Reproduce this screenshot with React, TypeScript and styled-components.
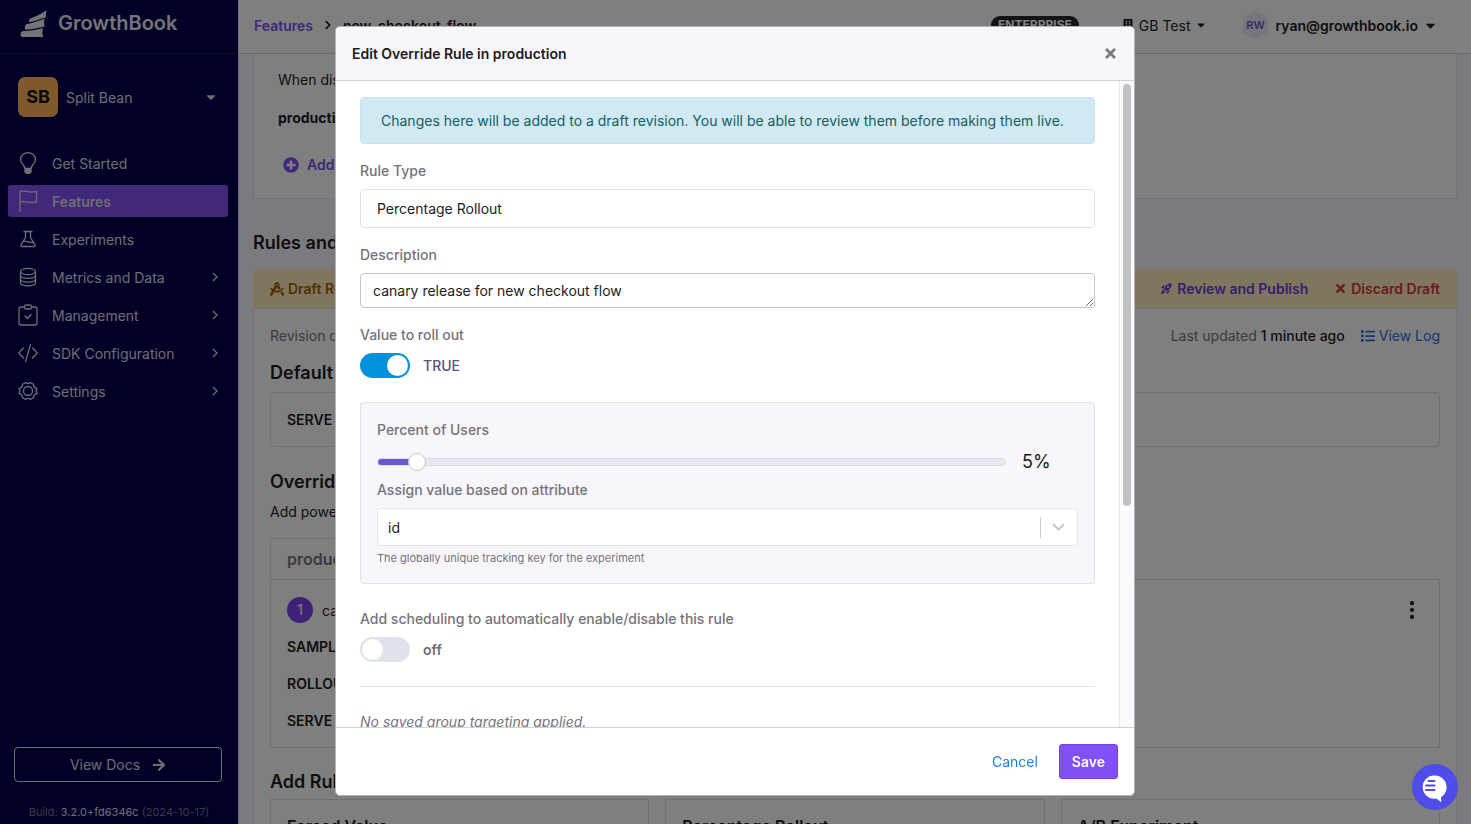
import React from "react";
import styled, { createGlobalStyle, css } from "styled-components";
import {
  FaArrowRight,
  FaBuilding,
  FaCaretDown,
  FaChevronRight,
  FaDraftingCompass,
  FaList,
  FaPlusCircle,
  FaTimes,
} from "react-icons/fa";
import { BsThreeDotsVertical } from "react-icons/bs";
import { MdRocketLaunch } from "react-icons/md";

const GlobalStyle = createGlobalStyle`
  *, *::before, *::after { box-sizing: border-box; }
  body {
    margin: 0;
    background: #f6f5fc;
    color: #1c1c22;
    font-family: Inter, "Liberation Sans", sans-serif;
    font-size: 14px;
    line-height: 21px;
  }
  button, input, select, textarea { font: inherit; color: inherit; }
  a { text-decoration: none; }
  h1, h2, h3, p, ul { margin: 0; padding: 0; }
  button { background: none; border: 0; padding: 0; cursor: pointer; }
`;

/* ---------- shell ---------- */

const Shell = styled.div`
  display: flex;
  height: 100vh;
  overflow: hidden;
`;

const Sidebar = styled.nav`
  flex: 0 0 238px;
  display: flex;
  flex-direction: column;
  background: #02004c;
  color: #dcdce6;
`;

const Brand = styled.a`
  display: flex;
  align-items: center;
  gap: 10px;
  height: 54px;
  padding: 0 20px 6px;
  border-bottom: 1px solid #1c1a4a;
  color: #e8e8ee;
  font-size: 20px;
  font-weight: 600;
`;

const OrgButton = styled.button`
  display: flex;
  align-items: center;
  gap: 8px;
  margin: 23px 0 27px;
  padding: 0 20px 0 18px;
  text-align: left;
  svg { margin-left: auto; }
`;

const OrgBadge = styled.span`
  width: 40px;
  height: 40px;
  border-radius: 7px;
  background: #ffb258;
  color: #111;
  font-size: 18px;
  font-weight: 700;
  line-height: 40px;
  text-align: center;
`;

const NavList = styled.ul`
  display: flex;
  flex-direction: column;
  gap: 6px;
  padding: 3px 10px 0 8px;
  list-style: none;
`;

const NavLink = styled.a<{ $active?: boolean }>`
  display: flex;
  align-items: center;
  gap: 14px;
  height: 32px;
  padding: 0 10px;
  border-radius: 3px;
  color: #dcdce6;
  ${(p) => p.$active && css`
    background: #8250f5;
    font-weight: 600;
  `}
`;

const NavIcon = styled.svg`
  width: 20px;
  height: 22px;
  fill: none;
  stroke: currentColor;
  stroke-width: 1.3;
  stroke-linecap: round;
  stroke-linejoin: round;
`;

const NavArrow = styled.svg`
  width: 6px;
  height: 10px;
  margin-left: auto;
  fill: none;
  stroke: currentColor;
  stroke-width: 1.3;
`;

const DocsLink = styled.a`
  display: flex;
  align-items: center;
  justify-content: center;
  gap: 12px;
  height: 35px;
  margin: auto 16px 20px 14px;
  border: 1px solid #dcdce6;
  border-radius: 4px;
  color: #dcdce6;
`;

const Build = styled.p`
  padding-bottom: 2px;
  color: #75758c;
  font-size: 11px;
  line-height: 20px;
  text-align: center;
  a { color: #dcdce6; }
`;

const Main = styled.main`
  flex: 1;
  min-width: 0;
  border-left: 1px solid #e0deea;
`;

const TopBar = styled.header`
  display: flex;
  align-items: center;
  height: 54px;
  padding: 0 33px 3px 15px;
  background: #fff;
  border-bottom: 1px solid #d2d0d8;
  font-weight: 600;
`;

const Crumbs = styled.div`
  display: flex;
  align-items: center;
  gap: 10px;
  margin-right: auto;
  a { color: #8250f5; }
`;

const PlanBadge = styled.span`
  margin-right: 43px;
  padding: 0 7px;
  border-radius: 9px;
  background: #26242c;
  color: #fff;
  font-size: 12px;
  font-weight: 700;
  line-height: 18px;
`;

const MenuButton = styled.button<{ $bold?: boolean }>`
  display: flex;
  align-items: center;
  gap: 5px;
  font-weight: ${(p) => (p.$bold ? 600 : 400)};
`;

const UserHex = styled.span`
  width: 26px;
  height: 28px;
  margin: 0 7px 0 35px;
  background: #eeecfb;
  clip-path: polygon(50% 0, 100% 22%, 100% 78%, 50% 100%, 0 78%, 0 22%);
  color: #6e56cf;
  font-size: 11px;
  font-weight: 600;
  line-height: 28px;
  text-align: center;
`;

/* ---------- feature page ---------- */

const Page = styled.div`
  padding: 0 14px;
`;

const EnvCard = styled.section`
  display: flex;
  flex-direction: column;
  align-items: flex-start;
  height: 145px;
  padding: 15px 24px;
  background: #fff;
  border: 1px solid #e6e4ee;
  border-top: 0;
  gap: 17px;
`;

const AddButton = styled.button`
  display: flex;
  align-items: center;
  gap: 8px;
  margin: 9px 5px;
  color: #8250f5;
  font-weight: 600;
`;

const Heading = styled.h2`
  font-size: 18px;
  font-weight: 600;
  line-height: 27px;
`;

const PageHeading = styled(Heading)`
  margin: 30px 0 13px;
`;

const DraftBar = styled.div`
  display: flex;
  align-items: center;
  gap: 26px;
  height: 39px;
  padding: 0 17px;
  background: #ffeeba;
  border-radius: 4px 4px 0 0;
  font-weight: 600;
`;

const IconText = styled.span<{ $color: string }>`
  display: flex;
  align-items: center;
  gap: 4px;
  color: ${(p) => p.$color};
`;

const BarAction = styled(IconText).attrs({ as: "button" })`
  font-weight: 600;
`;

const Spacer = styled.div`
  flex: 1;
`;

const RulesCard = styled.section`
  padding: 16px;
  background: #fff;
  border: 1px solid #e4e2ec;
`;

const RevisionRow = styled.div`
  display: flex;
  align-items: center;
  justify-content: space-between;
  margin-bottom: 13px;
  color: #77757f;
  b { color: #1c1c22; font-weight: 500; }
`;

const Inline = styled.div`
  display: flex;
  gap: 16px;
`;

const ServeBox = styled.div`
  margin: 6px 0 21px;
  padding: 16px;
  border: 1px solid #e2e0e7;
  border-radius: 4px;
  font-weight: 600;
`;

const Lead = styled.p`
  margin: 6px 0 16px;
`;

const EnvTab = styled.button`
  display: block;
  height: 41px;
  padding: 0 16px;
  border: 1px solid #e2e0e7;
  border-bottom: 0;
  color: #77757f;
  font-size: 16px;
  font-weight: 600;
`;

const RuleBox = styled.div`
  display: flex;
  flex-direction: column;
  gap: 16px;
  margin-bottom: 20px;
  padding: 17px 16px 16px;
  border: 1px solid #e2e0e7;
  font-weight: 600;
`;

const RuleTitle = styled.div`
  display: flex;
  align-items: center;
  gap: 9px;
  margin-bottom: -3px;
  font-weight: 400;
  button { display: flex; margin-left: auto; }
`;

const RuleNumber = styled.span`
  width: 26px;
  height: 26px;
  border-radius: 50%;
  background: #7c45ea;
  color: #fff;
  line-height: 26px;
  text-align: center;
`;

const AddGrid = styled.div`
  display: grid;
  grid-template-columns: repeat(3, 1fr);
  gap: 16px;
  margin-top: 4px;
`;

const AddCard = styled.div`
  height: 120px;
  padding: 16px;
  border: 1px solid #e2e0e7;
  font-size: 16px;
  font-weight: 600;
`;

/* ---------- modal ---------- */

const Backdrop = styled.div`
  position: fixed;
  inset: 0;
  display: flex;
  justify-content: center;
  padding: 26px 17px 28px 16px;
  background: rgba(0, 0, 0, 0.5);
`;

const Dialog = styled.form`
  display: flex;
  flex-direction: column;
  width: 100%;
  max-width: 800px;
  overflow: hidden;
  background: #fff;
  border: 1px solid #b4b2b8;
  border-radius: 5px;
`;

const DialogHeader = styled.header`
  display: flex;
  align-items: center;
  justify-content: space-between;
  height: 54px;
  padding: 0 16px;
  background: #f8f6fb;
  border-bottom: 1px solid #d3d1d8;
  h1 { font-size: 14px; font-weight: 600; line-height: 21px; }
  button { display: flex; color: #7c7a80; }
`;

const DialogMain = styled.div`
  flex: 1;
  display: flex;
  min-height: 0;
`;

const DialogBody = styled.div`
  flex: 1;
  padding: 16px 24px;
  overflow-y: auto;
  scrollbar-width: none;
`;

const ScrollTrack = styled.div`
  width: 15px;
  padding: 3px;
  background: #fbfafd;
  border-left: 1px solid #e8e6ec;
`;

const ScrollThumb = styled.div`
  width: 8px;
  height: 66%;
  border-radius: 4px;
  background: #c1c0c3;
`;

const DialogFooter = styled.footer`
  display: flex;
  align-items: center;
  justify-content: flex-end;
  gap: 21px;
  padding: 16px;
  border-top: 1px solid #d3d1d8;
`;

const CancelButton = styled.button`
  color: #1f7cf0;
`;

const SaveButton = styled.button`
  height: 35px;
  padding: 0 12px;
  border: 1px solid #7340ea;
  border-radius: 3px;
  background: #8250f5;
  color: #fff;
  font-weight: 600;
`;

const Alert = styled.div`
  margin-bottom: 16px;
  padding: 12px 20px;
  border: 1px solid #c4e4ee;
  border-radius: 4px;
  background: #d1e9f3;
  color: #145e66;
`;

const Field = styled.div`
  margin-bottom: 16px;
`;

const Label = styled.label`
  display: block;
  margin-bottom: 8px;
  color: #75737a;
  font-weight: 500;
`;

const TextBox = styled.input`
  display: block;
  width: 100%;
  height: 39px;
  padding: 0 16px;
  border: 1px solid #e2e1ea;
  border-radius: 4px;
  background: #fff;
`;

const TextArea = styled.textarea`
  display: block;
  width: 100%;
  height: 35px;
  padding: 6px 12px;
  border: 1px solid #c5c3cc;
  border-radius: 4px;
  resize: vertical;
`;

const SwitchRow = styled.div`
  display: flex;
  align-items: center;
  gap: 13px;
  height: 25px;
  margin-bottom: 24px;
`;

const Switch = styled.input`
  appearance: none;
  width: 50px;
  height: 25px;
  margin: 0;
  padding: 2px;
  border-radius: 13px;
  background: #dfe2e9;
  &::before {
    content: "";
    display: block;
    width: 21px;
    height: 21px;
    border-radius: 50%;
    background: #fff;
  }
  &:checked { background: #0291db; }
  &:checked::before { margin-left: auto; }
`;

const SwitchText = styled.span<{ $on?: boolean }>`
  line-height: 25px;
  color: ${(p) => (p.$on ? "#5a5283" : "#706e75")};
  font-weight: ${(p) => (p.$on ? 500 : 600)};
`;

const Panel = styled.div`
  margin-bottom: 24px;
  padding: 16px;
  border: 1px solid #e2e0ea;
  border-radius: 4px;
  background: #f8f6fb;
`;

const SliderRow = styled.div`
  display: flex;
  align-items: center;
  gap: 16px;
  height: 27px;
  margin-bottom: 4px;
  output { width: 56px; font-size: 18px; }
`;

const Slider = styled.input`
  flex: 1;
  appearance: none;
  height: 18px;
  margin: 0;
  background: transparent;
  &::-webkit-slider-runnable-track {
    height: 8px;
    border: 1px solid #dcdae2;
    border-radius: 4px;
    background: linear-gradient(to right, #6a5ad0 6%, #e9e7ef 6%) border-box;
  }
  &::-webkit-slider-thumb {
    appearance: none;
    width: 18px;
    height: 18px;
    margin-top: -6px;
    border: 1px solid #c9c7d0;
    border-radius: 50%;
    background: #fff;
  }
`;

const SelectBox = styled.div`
  display: flex;
  align-items: center;
  height: 38px;
  padding-right: 12px;
  border: 1px solid #e6e4ec;
  border-radius: 4px;
  background: #fff;
  svg {
    width: 13px;
    height: 8px;
    fill: none;
    stroke: #c8c7ca;
    stroke-width: 2;
  }
`;

const Select = styled.select`
  flex: 1;
  height: 21px;
  margin-right: 11px;
  padding: 0 10px;
  border: 0;
  border-right: 1px solid #cccbcf;
  appearance: none;
  background: transparent;
`;

const Help = styled.p`
  margin-top: 4px;
  color: #75737a;
  font-size: 11px;
  line-height: 17px;
`;

const Rule = styled.hr`
  height: 1px;
  margin: 0 0 24px;
  border: 0;
  background: #e3e2e7;
`;

const Note = styled.p`
  color: #75737a;
  font-style: italic;
`;

const ChatButton = styled.button`
  position: fixed;
  right: 13px;
  bottom: 14px;
  width: 46px;
  height: 46px;
  border-radius: 50%;
  background: #4f4de9;
  svg { display: block; }
`;

/* ---------- data ---------- */

const navItems: { label: string; more?: boolean; active?: boolean; icon: React.ReactNode }[] = [
  {
    label: "Get Started",
    icon: (
      <>
        <path d="M7 16.500c0-3-4.500-4.800-4.500-8.800a7.500 7 0 0 1 15 0c0 4-4.500 5.800-4.500 8.800z" />
        <path d="M7 17h6v3l-1.500 1.300h-3L7 20z" fill="currentColor" />
      </>
    ),
  },
  {
    label: "Features",
    active: true,
    icon: <path d="M2 21.500V1.500c3-.6 5-.5 8 .2s5 .6 8.500-.4v10.500c-3.500 1-5.500 1-8.500.3s-5-.9-8-.2" />,
  },
  {
    label: "Experiments",
    icon: (
      <path d="M6 3.500h8M7.500 3.500v6L3 16.800c-.5 1-.1 1.700 1 1.700h12c1.100 0 1.500-.7 1-1.700L12.500 9.500v-6M5.300 13.300c3.200-1 4.500 1.800 9.700 1" />
    ),
  },
  {
    label: "Metrics and Data",
    more: true,
    icon: (
      <>
        <ellipse cx="10" cy="5.500" rx="7.500" ry="3.200" />
        <path d="M2.500 5.500v11.300c0 4.200 15 4.200 15 0V5.500M2.500 9.300c0 4.200 15 4.200 15 0M2.500 13c0 4.200 15 4.200 15 0" />
      </>
    ),
  },
  {
    label: "Management",
    more: true,
    icon: (
      <>
        <path d="M6 3H3a2 2 0 0 0-2 2v14a2 2 0 0 0 2 2h14a2 2 0 0 0 2-2V5a2 2 0 0 0-2-2h-3M7 12l2.500 2.500L13 10.500" />
        <rect x="6.500" y="1" width="7" height="4" rx="1.500" />
      </>
    ),
  },
  {
    label: "SDK Configuration",
    more: true,
    icon: <path d="M5.500 6 .7 11l4.800 5M14.500 6l4.800 5-4.800 5M12.500 2.500l-5 17" />,
  },
  {
    label: "Settings",
    more: true,
    icon: (
      <>
        <circle cx="10" cy="11" r="4.500" />
        <path d="M7.600 2.600Q10 4.600 12.400 2.600L15.500 4.300Q15.200 7.300 18.400 8.600Q19.400 9 18.900 9.800Q17 11 18.900 12.500Q19.400 13.200 18.400 13.600Q15.200 14.800 15.500 17.700L12.400 19.400Q10 17.400 7.600 19.400L4.500 17.700Q4.800 14.800 1.600 13.600Q.6 13.200 1.100 12.400Q3 11 1.100 9.600Q.6 8.900 1.600 8.500Q4.800 7.300 4.500 4.300Z" />
      </>
    ),
  },
];

const addable = ["Forced Value", "Percentage Rollout", "A/B Experiment"];

/* ---------- app ---------- */

export default function App() {
  return (
    <>
      <GlobalStyle />
      <Shell>
        <Sidebar>
          <Brand href="#">
            <svg width="28" height="28" viewBox="0 0 28 28" fill="currentColor" aria-hidden="true">
              <path d="M10.800 8.300C16 6.500 22 3.500 26.800 0c-1 2.600-1.200 4.800-.6 7.200C21 9 15 11 9.300 12.200c-.8-1.400 0-3 1.500-3.900z" />
              <path d="M6.300 14.300C12 13 19 10.800 24.800 8.400c-.9 2.800-.9 5.400 0 8.100-6 1.600-13 2.800-19.300 3.200-1.100-1.700-.8-4.300.8-5.400z" />
              <path d="M2.300 21.300c7-.3 14.500-1.400 20.700-3.200-.8 3-.8 6 .1 8.900H1.800C0 26 .1 22 2.300 21.300z" />
            </svg>
            GrowthBook
          </Brand>
          <OrgButton type="button">
            <OrgBadge>SB</OrgBadge>
            Split Bean
            <FaCaretDown size={14} />
          </OrgButton>
          <NavList>
            {navItems.map((item) => (
              <li key={item.label}>
                <NavLink href="#" $active={item.active}>
                  <NavIcon viewBox="0 0 20 22">{item.icon}</NavIcon>
                  {item.label}
                  {item.more && (
                    <NavArrow viewBox="0 0 6 10">
                      <path d="M1 1l4 4-4 4" />
                    </NavArrow>
                  )}
                </NavLink>
              </li>
            ))}
          </NavList>
          <DocsLink href="#">
            View Docs <FaArrowRight size={14} />
          </DocsLink>
          <Build>
            Build: <a href="#">3.2.0+fd6346c</a> (2024-10-17)
          </Build>
        </Sidebar>

        <Main>
          <TopBar>
            <Crumbs>
              <a href="#">Features</a>
              <FaChevronRight size={10} />
              <span>new-checkout-flow</span>
            </Crumbs>
            <PlanBadge>ENTERPRISE</PlanBadge>
            <MenuButton type="button">
              <FaBuilding size={12} />
              GB Test
              <FaCaretDown size={12} />
            </MenuButton>
            <UserHex>RW</UserHex>
            <MenuButton type="button" $bold>
              ryan@growthbook.io
              <FaCaretDown size={15} />
            </MenuButton>
          </TopBar>

          <Page>
            <EnvCard>
              <p>When disabled</p>
              <Inline as="b">production</Inline>
              <AddButton type="button">
                <FaPlusCircle size={16} /> Add
              </AddButton>
            </EnvCard>

            <PageHeading>Rules and Values</PageHeading>
            <DraftBar>
              <IconText $color="#a4600c">
                <FaDraftingCompass size={14} /> Draft Revision
              </IconText>
              <Spacer />
              <BarAction $color="#6a3fe0">
                <MdRocketLaunch size={13} /> Review and Publish
              </BarAction>
              <BarAction $color="#d9343c">
                <FaTimes size={13} /> Discard Draft
              </BarAction>
            </DraftBar>
            <RulesCard>
              <RevisionRow>
                <span>Revision created</span>
                <Inline>
                  <span>
                    Last updated <b>1 minute ago</b>
                  </span>
                  <IconText as="a" href="#" $color="#1f6fe0">
                    <FaList size={14} /> View Log
                  </IconText>
                </Inline>
              </RevisionRow>
              <Heading>Default Value</Heading>
              <ServeBox>SERVE</ServeBox>
              <Heading>Override Rules</Heading>
              <Lead>Add powerful logic</Lead>
              <EnvTab type="button">production</EnvTab>
              <RuleBox>
                <RuleTitle>
                  <RuleNumber>1</RuleNumber>
                  canary release
                  <button type="button" aria-label="Rule menu">
                    <BsThreeDotsVertical size={22} />
                  </button>
                </RuleTitle>
                <span>SAMPLE</span>
                <span>ROLLOUT</span>
                <span>SERVE</span>
              </RuleBox>
              <Heading>Add Rules</Heading>
              <AddGrid>
                {addable.map((name) => (
                  <AddCard key={name}>{name}</AddCard>
                ))}
              </AddGrid>
            </RulesCard>
          </Page>
        </Main>
      </Shell>

      <Backdrop>
        <Dialog role="dialog" aria-labelledby="dialog-title">
          <DialogHeader>
            <h1 id="dialog-title">Edit Override Rule in production</h1>
            <button type="button" aria-label="Close">
              <FaTimes size={15} />
            </button>
          </DialogHeader>
          <DialogMain>
            <DialogBody>
              <Alert>
                Changes here will be added to a draft revision. You will be able to review them
                before making them live.
              </Alert>
              <Field>
                <Label htmlFor="type">Rule Type</Label>
                <TextBox id="type" readOnly value="Percentage Rollout" />
              </Field>
              <Field>
                <Label htmlFor="description">Description</Label>
                <TextArea id="description" rows={1} defaultValue="canary release for new checkout flow" />
              </Field>
              <Label htmlFor="value">Value to roll out</Label>
              <SwitchRow>
                <Switch id="value" type="checkbox" defaultChecked />
                <SwitchText $on>TRUE</SwitchText>
              </SwitchRow>
              <Panel>
                <Label htmlFor="percent">Percent of Users</Label>
                <SliderRow>
                  <Slider id="percent" type="range" min={0} max={100} defaultValue={5} />
                  <output htmlFor="percent">5%</output>
                </SliderRow>
                <Label htmlFor="attribute">Assign value based on attribute</Label>
                <SelectBox>
                  <Select id="attribute" defaultValue="id">
                    <option>id</option>
                  </Select>
                  <svg viewBox="0 0 13 8" aria-hidden="true">
                    <path d="M1 1l5.500 5.500L12 1" />
                  </svg>
                </SelectBox>
                <Help>The globally unique tracking key for the experiment</Help>
              </Panel>
              <Label htmlFor="schedule">
                Add scheduling to automatically enable/disable this rule
              </Label>
              <SwitchRow>
                <Switch id="schedule" type="checkbox" />
                <SwitchText>off</SwitchText>
              </SwitchRow>
              <Rule />
              <Note>No saved group targeting applied.</Note>
            </DialogBody>
            <ScrollTrack>
              <ScrollThumb />
            </ScrollTrack>
          </DialogMain>
          <DialogFooter>
            <CancelButton type="button">Cancel</CancelButton>
            <SaveButton type="button">Save</SaveButton>
          </DialogFooter>
        </Dialog>
      </Backdrop>

      <ChatButton type="button" aria-label="Open chat">
        <svg width="46" height="46" viewBox="0 0 46 46">
          <path d="M23 11.500a11.700 11.700 0 0 1 6 21.700l.3 5-5-3.700A11.600 11.600 0 1 1 23 11.500z" fill="#fff" />
          <path d="M16.500 17h6M14 21.500h8.500M14 26h8.500" stroke="#4f4de9" strokeWidth="2" strokeLinecap="round" />
        </svg>
      </ChatButton>
    </>
  );
}
